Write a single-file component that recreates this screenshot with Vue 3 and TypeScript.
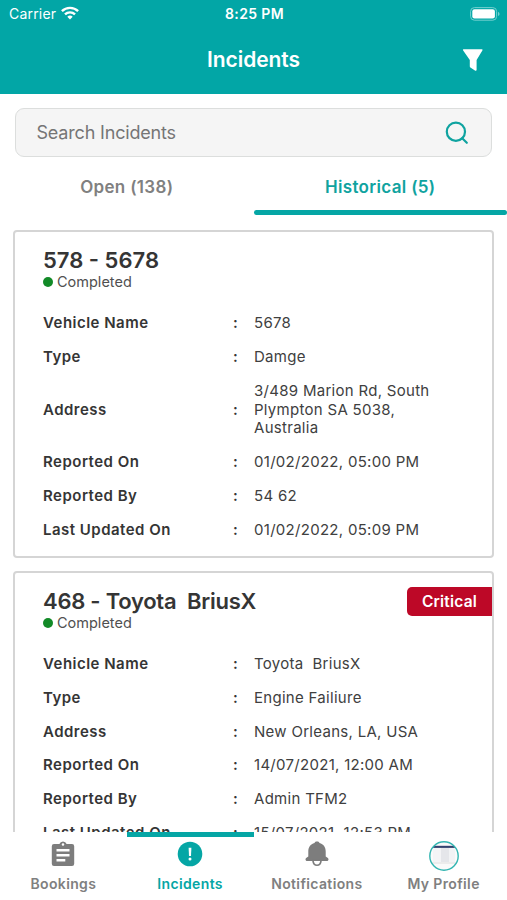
<script setup lang="ts">
interface Row {
  label: string
  value: string
}
interface Incident {
  title: string
  status: string
  critical: boolean
  rows: Row[]
}

const incidents: Incident[] = [
  {
    title: '578 - 5678',
    status: 'Completed',
    critical: false,
    rows: [
      { label: 'Vehicle Name', value: '5678' },
      { label: 'Type', value: 'Damge' },
      { label: 'Address', value: '3/489 Marion Rd, South\nPlympton SA 5038,\nAustralia' },
      { label: 'Reported On', value: '01/02/2022, 05:00 PM' },
      { label: 'Reported By', value: '54 62' },
      { label: 'Last Updated On', value: '01/02/2022, 05:09 PM' },
    ],
  },
  {
    title: '468 - Toyota  BriusX',
    status: 'Completed',
    critical: true,
    rows: [
      { label: 'Vehicle Name', value: 'Toyota  BriusX' },
      { label: 'Type', value: 'Engine Failiure' },
      { label: 'Address', value: 'New Orleans, LA, USA' },
      { label: 'Reported On', value: '14/07/2021, 12:00 AM' },
      { label: 'Reported By', value: 'Admin TFM2' },
      { label: 'Last Updated On', value: '15/07/2021, 12:53 PM' },
    ],
  },
]
</script>

<template>
  <div class="screen">
    <header class="header">
      <div class="status-bar">
        <div class="carrier">
          <span>Carrier</span>
          <svg class="wifi" viewBox="0 0 18 14" width="18" height="14">
            <g fill="none" stroke="#fff" stroke-width="2.4">
              <path d="M0.9 5.2a11.5 11.5 0 0 1 16.2 0" />
              <path d="M4 8.4a7.1 7.1 0 0 1 10 0" />
            </g>
            <path d="M9 13.4 6.3 10.7a3.9 3.9 0 0 1 5.4 0z" fill="#fff" />
          </svg>
        </div>
        <span class="time">8:25 PM</span>
        <svg class="battery" viewBox="0 0 30 14" width="30" height="14">
          <rect x="0.6" y="0.6" width="26" height="12.6" rx="3.8" fill="none" stroke="#73d0cf" stroke-width="1" />
          <rect x="2.3" y="2.3" width="22.6" height="9.2" rx="2.2" fill="#fff" />
          <path d="M28 4.8q1.6.7 1.6 2.1T28 9z" fill="#73d0cf" />
        </svg>
      </div>
      <div class="title-bar">
        <h1>Incidents</h1>
        <svg class="filter" viewBox="0 0 22 24" width="22" height="24">
          <path d="M1.6 1.2h18.2q1.1 0.1.7 1.1L14.6 12v10.1q-.2 1.1-1.3.6L8.400 19.400q-.6-.5-.6-1.200V12L1 2.300q-.4-.9.6-1.100z" fill="#fff" />
        </svg>
      </div>
    </header>

    <div class="search">
      <span class="placeholder">Search Incidents</span>
      <svg viewBox="0 0 24 24" width="24" height="24" fill="none" stroke="#0fa3a0" stroke-width="2.2" stroke-linecap="round">
        <circle cx="10.900" cy="10.700" r="9.100" />
        <path d="m17.200 17.300 4.600 4.500" />
      </svg>
    </div>

    <nav class="tabs">
      <div class="tab"><span>Open (138)</span></div>
      <div class="tab active"><span>Historical (5)</span></div>
    </nav>

    <main class="list">
      <article v-for="item in incidents" :key="item.title" class="card" :class="{ critical: item.critical }">
        <h2>{{ item.title }}</h2>
        <div class="state"><i class="dot"></i><span>{{ item.status }}</span></div>
        <div v-if="item.critical" class="badge"><span>Critical</span></div>
        <dl>
          <div v-for="row in item.rows" :key="row.label" class="row">
            <dt>{{ row.label }}</dt>
            <span class="colon">:</span>
            <dd>{{ row.value }}</dd>
          </div>
        </dl>
      </article>
    </main>

    <footer class="bottom">
      <div class="item">
        <svg viewBox="0 0 24 26" width="24" height="26">
          <path fill="#7d7d7d" fill-rule="evenodd" d="M3 3h5.400a3.800 3.800 0 0 1 7.200 0H21q2.200 0 2.200 2.200v17.600Q23.200 25 21 25H3q-2.200 0-2.200-2.200V5.200Q.8 3 3 3zM12 2.200a1.300 1.300 0 1 0 0 2.600 1.300 1.300 0 0 0 0-2.600zM5.500 8v2.500h13V8zM5.500 13v2.500h13V13zM5.500 18v2.500h8.800V18z" />
        </svg>
        <span>Bookings</span>
      </div>
      <div class="item current">
        <svg viewBox="0 0 26 26" width="26" height="26">
          <circle cx="13" cy="13" r="12.300" fill="#05a6a5" />
          <path d="M11.600 6.800h2.800l-.4 8.200h-2z" fill="#fff" />
          <circle cx="13" cy="18" r="1.500" fill="#fff" />
        </svg>
        <span>Incidents</span>
      </div>
      <div class="item">
        <svg viewBox="0 0 24 26" width="24" height="26">
          <path d="M12 .6c1.300 0 2 .5 2.500 1.300 4 1.100 6.200 4.200 6.200 8.600v5l2.200 1.600c1.200 1.200.5 2.900-1.100 2.900H2.200c-1.600 0-2.300-1.700-1.100-2.900l2.200-1.600v-5c0-4.400 2.200-7.500 6.200-8.600C10 1.100 10.700.6 12 .6z" fill="#7d7d7d" />
          <path d="M7.900 19.300h8.200q-.5 5-4.100 5t-4.100-5z" fill="#fff" stroke="#7d7d7d" stroke-width="1.600" />
        </svg>
        <span>Notifications</span>
      </div>
      <div class="item">
        <svg viewBox="0 0 30 30" width="30" height="30">
          <defs>
            <clipPath id="avatar"><circle cx="15" cy="15" r="14" /></clipPath>
          </defs>
          <g clip-path="url(#avatar)">
            <rect width="30" height="30" fill="#fafafa" />
            <rect y="4.800" width="30" height="2.100" fill="#34436f" />
            <rect x="4" y="7" width="8" height="14" fill="#f4f4f6" />
            <rect x="12" y="7" width="8" height="14" fill="#e5e6ea" />
            <rect x="20" y="7" width="6" height="14" fill="#f2f3f5" />
            <rect x="2" y="21.500" width="26" height="1" fill="#dedede" />
          </g>
          <circle cx="15" cy="15" r="14.200" fill="none" stroke="#32b5b1" stroke-width="1.400" />
        </svg>
        <span>My Profile</span>
      </div>
    </footer>
  </div>
</template>

<style>
body {
  margin: 0;
}
</style>

<style scoped>
.screen {
  display: flex;
  flex-direction: column;
  box-sizing: border-box;
  width: 507px;
  height: 900px;
  overflow: hidden;
  background: #fff;
  color: #353535;
  font-family: Inter, "Liberation Sans", sans-serif;
}
span, h1, h2, dt, dd {
  white-space: pre;
}
h1, h2, dl, dd {
  margin: 0;
}
.header {
  flex: none;
  height: 93.500px;
  background: #02a6a6;
  color: #fff;
}
.status-bar {
  display: grid;
  grid-template-columns: 1fr auto 1fr;
  align-items: center;
  height: 27px;
  padding: 0 7px 0 9px;
  font-size: 14px;
  line-height: 18px;
}
.carrier {
  display: flex;
  align-items: center;
  gap: 5px;
  letter-spacing: 0.200px;
}
.wifi {
  margin-top: -1px;
}
.time {
  font-weight: 600;
  letter-spacing: 0.350px;
}
.battery {
  justify-self: end;
}
.title-bar {
  display: grid;
  grid-template-columns: 1fr auto 1fr;
  align-items: center;
  height: 66px;
  padding: 0 23px;
}
h1 {
  grid-column: 2;
  font-size: 21px;
  line-height: 26px;
  font-weight: 600;
  letter-spacing: -0.050px;
}
.filter {
  justify-self: end;
}
.search {
  flex: none;
  display: flex;
  align-items: center;
  justify-content: space-between;
  box-sizing: border-box;
  height: 49px;
  margin: 14.500px 15px 0;
  padding: 0 22px 0 20.500px;
  border: 1.500px solid #dcdedd;
  border-radius: 9px;
  background: #f5f5f5;
}
.placeholder {
  color: #757575;
  font-size: 18px;
  letter-spacing: -0.180px;
}
.tabs {
  flex: none;
  display: flex;
  height: 57.500px;
}
.tab {
  flex: 1;
  box-sizing: border-box;
  padding-top: 19px;
  color: #808080;
  text-align: center;
  font-size: 17px;
  line-height: 22px;
  font-weight: 600;
  letter-spacing: 0.320px;
}
.active {
  display: flex;
  flex-direction: column;
  justify-content: space-between;
  color: #0fa3a0;
}
.active::after {
  content: "";
  height: 4.500px;
  border-radius: 3px;
  background: #05a6a5;
}
.list {
  flex: 1;
  min-height: 0;
  overflow: hidden;
  padding: 15px 13px 0;
}
.card {
  position: relative;
  box-sizing: border-box;
  height: 328px;
  margin-bottom: 13px;
  padding: 15px 28px 0;
  border: 2px solid #d5d5d5;
  border-radius: 4px;
}
h2 {
  font-size: 22px;
  line-height: 26px;
  font-weight: 600;
}
.critical h2 {
  letter-spacing: -0.250px;
}
.state {
  display: flex;
  align-items: center;
  gap: 4.500px;
  height: 18px;
  margin-left: -0.500px;
  font-size: 14.500px;
  color: #505050;
}
.dot {
  width: 10px;
  height: 10px;
  border-radius: 50%;
  background: #128a27;
}
.badge {
  position: absolute;
  top: 14px;
  right: 0;
  display: flex;
  align-items: center;
  justify-content: center;
  width: 85px;
  height: 29px;
  border-radius: 5px 0 0 5px;
  background: #bd0827;
  color: #fff;
  font-size: 15.500px;
  font-weight: 600;
  letter-spacing: 0.200px;
}
dl {
  display: flex;
  flex-direction: column;
  gap: 14.900px;
  margin-top: 23.500px;
}
.row {
  display: grid;
  grid-template-columns: 190px 21px 1fr;
  align-items: center;
  font-size: 15px;
  line-height: 18.900px;
  letter-spacing: 0.290px;
}
dt, .colon {
  font-weight: 600;
}
dt {
  letter-spacing: 0.480px;
}
dd {
  color: #404040;
}
.bottom {
  flex: none;
  display: grid;
  grid-template-columns: repeat(4, 1fr);
  height: 68.500px;
  background: #fff;
}
.item {
  position: relative;
  display: flex;
  flex-direction: column;
  align-items: center;
  justify-content: space-between;
  box-sizing: border-box;
  padding: 9px 0 7px;
  color: #808080;
  font-size: 14px;
  line-height: 18px;
  font-weight: 600;
  letter-spacing: 0.360px;
}
.current {
  color: #05a6a5;
}
.current::before {
  content: "";
  position: absolute;
  top: 0;
  left: 0;
  width: 100%;
  height: 5px;
  background: #05a6a5;
}
</style>
